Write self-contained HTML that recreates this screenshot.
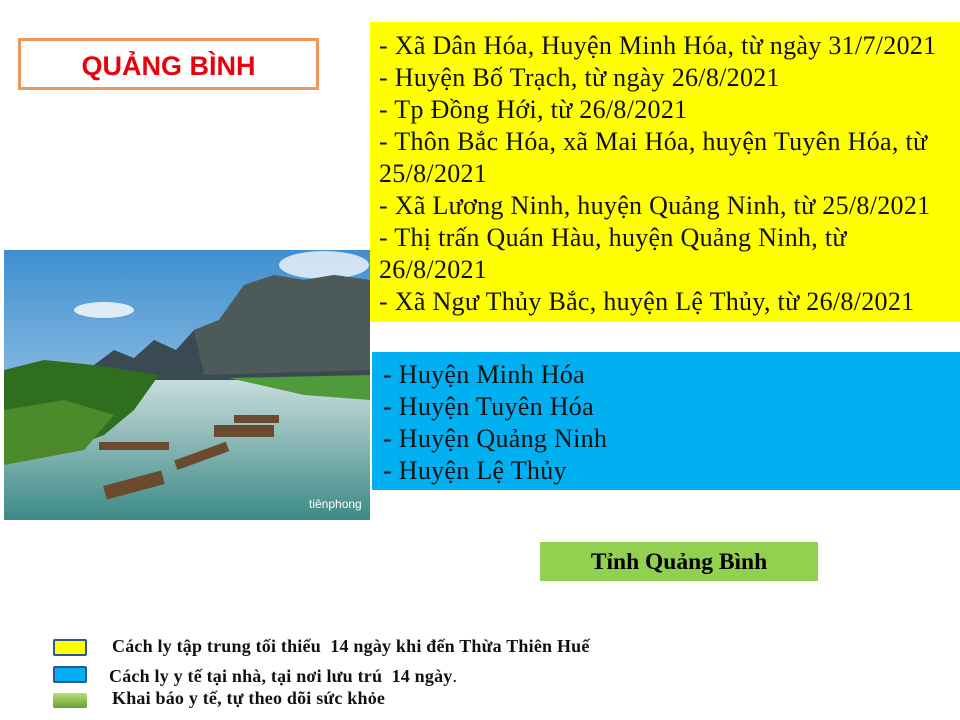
<!DOCTYPE html>
<html><head><meta charset="utf-8"><style>
body{margin:0;width:960px;height:720px;background:#fff;position:relative;overflow:hidden;font-family:"Liberation Serif",serif}
.a{position:absolute}
.title{left:18px;top:38px;width:295px;height:46px;border:3px solid #f0955a;color:#e8000b;font:bold 27px "Liberation Sans",sans-serif;text-align:center;line-height:50px}
.y{left:370px;top:22px;width:590px;height:300px;background:#ffff00;font-size:26px;letter-spacing:0.3px;line-height:32px;color:#111;padding:8px 0 0 9px;box-sizing:border-box;white-space:nowrap}
.b{left:372px;top:352px;width:588px;height:138px;background:#00b0f0;font-size:26px;letter-spacing:0.3px;line-height:32px;color:#111;padding:7px 0 0 11px;box-sizing:border-box}
.g{left:540px;top:542px;width:278px;height:39px;background:#92d050;font-weight:bold;font-size:23.5px;text-align:center;line-height:41px}
.lg{font-weight:bold;font-size:18px;letter-spacing:0.2px;color:#111;white-space:nowrap}
.sw{width:30px;height:13px;border:2px solid #2f5597;border-radius:2px}
</style></head><body>
<div class="a title">QUẢNG BÌNH</div>
<div class="a y">- Xã Dân Hóa, Huyện Minh Hóa, từ ngày 31/7/2021<br>- Huyện Bố Trạch, từ ngày 26/8/2021<br>- Tp Đồng Hới, từ 26/8/2021<br>- Thôn Bắc Hóa, xã Mai Hóa, huyện Tuyên Hóa, từ<br>25/8/2021<br>- Xã Lương Ninh, huyện Quảng Ninh, từ 25/8/2021<br>- Thị trấn Quán Hàu, huyện Quảng Ninh, từ<br>26/8/2021<br>- Xã Ngư Thủy Bắc, huyện Lệ Thủy, từ 26/8/2021</div>
<div class="a b">- Huyện Minh Hóa<br>- Huyện Tuyên Hóa<br>- Huyện Quảng Ninh<br>- Huyện Lệ Thủy</div>
<div class="a g">Tỉnh Quảng Bình</div>
<svg class="a" style="left:4px;top:250px" width="366" height="270" viewBox="0 0 366 270">
<defs>
<linearGradient id="sky" x1="0" y1="0" x2="0" y2="1"><stop offset="0" stop-color="#3f8fd0"/><stop offset="1" stop-color="#cfe3f0"/></linearGradient>
<linearGradient id="wat" x1="0" y1="0" x2="0" y2="1"><stop offset="0" stop-color="#c8dcdc"/><stop offset="1" stop-color="#3c8a86"/></linearGradient>
</defs>
<rect width="366" height="270" fill="url(#sky)"/>
<ellipse cx="320" cy="15" rx="45" ry="14" fill="#f4f8fb" opacity=".8"/>
<ellipse cx="100" cy="60" rx="30" ry="8" fill="#fff" opacity=".8"/>
<path d="M90 115 L110 100 L130 108 L150 90 L172 100 L190 80 L215 70 L240 35 L270 25 L300 30 L330 25 L366 30 L366 130 L120 130 Z" fill="#3a4a52"/>
<path d="M190 80 L215 70 L240 35 L270 25 L300 30 L330 25 L366 30 L366 120 L200 125 Z" fill="#4d5a5a"/>
<rect y="130" width="366" height="140" fill="url(#wat)"/>
<path d="M0 120 L40 110 L90 115 L155 125 L130 160 L100 185 L60 200 L0 210 Z" fill="#2f6e1f"/>
<path d="M0 160 L60 150 L110 165 L80 200 L0 215 Z" fill="#4d8a2a"/>
<path d="M225 128 L366 125 L366 150 L300 145 Z" fill="#4f9a3a"/>
<g fill="#6b4a2e">
<rect x="95" y="122" width="70" height="8" transform="translate(0,70)"/>
<rect x="170" y="200" width="55" height="10" transform="rotate(-20 200 205)"/>
<rect x="100" y="228" width="60" height="14" transform="rotate(-15 130 235)"/>
<rect x="210" y="175" width="60" height="12"/>
<rect x="230" y="165" width="45" height="8"/>
</g>
<text x="305" y="258" font-family="Liberation Sans,sans-serif" font-size="12" fill="#fff">tiênphong</text>
</svg>
<div class="a sw" style="left:53px;top:639px;background:#ffff00"></div>
<div class="a sw" style="left:53px;top:666px;background:#00b0f0"></div>
<div class="a" style="left:53px;top:693px;width:34px;height:15px;background:linear-gradient(#b6e07a,#6aa02f);border-radius:2px"></div>
<div class="a lg" style="left:112px;top:636px">Cách ly tập trung tối thiểu&nbsp; 14 ngày khi đến Thừa Thiên Huế</div>
<div class="a lg" style="left:109px;top:666px">Cách ly y tế tại nhà, tại nơi lưu trú&nbsp; 14 ngày<span style="font-weight:normal">.</span></div>
<div class="a lg" style="left:112px;top:688px">Khai báo y tế, tự theo dõi sức khỏe</div>
</body></html>
